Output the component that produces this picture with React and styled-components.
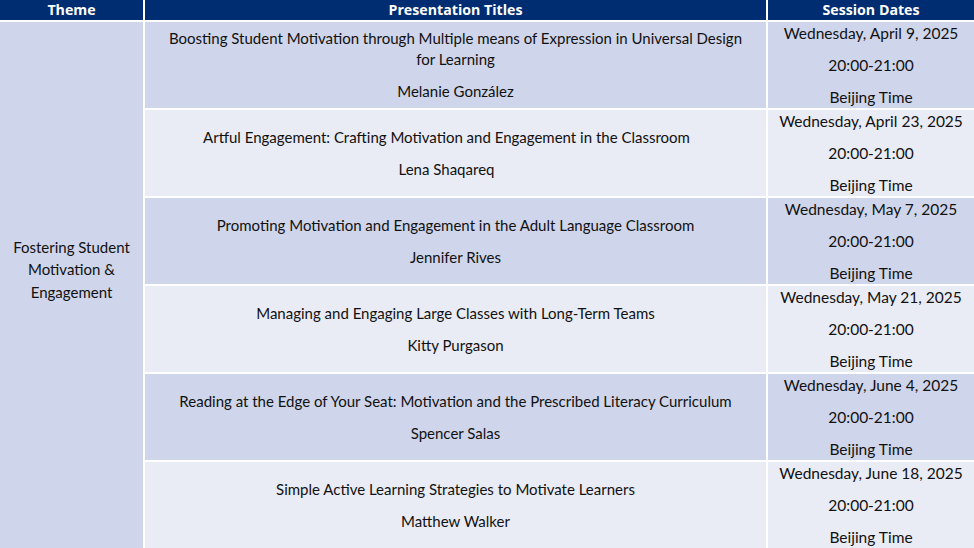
import React from 'react';
import styled, { createGlobalStyle } from 'styled-components';

const Global = createGlobalStyle`
  html, body {
    margin: 0;
    padding: 0;
    background: #ffffff;
    overflow: hidden;
  }
  body {
    font-family: Lato, "Noto Sans", sans-serif;
    color: #111;
  }
`;

const NAVY = '#002d72';
const DARK = '#cfd5ea';
const LIGHT = '#e9ebf5';

const sessions = [
  {
    title: 'Boosting Student Motivation through Multiple means of Expression in Universal Design for Learning',
    speaker: 'Melanie González',
    date: 'Wednesday, April 9, 2025',
  },
  {
    title: 'Artful Engagement: Crafting Motivation and Engagement in the Classroom',
    speaker: 'Lena Shaqareq',
    date: 'Wednesday, April 23, 2025',
    shift: 18,
  },
  {
    title: 'Promoting Motivation and Engagement in the Adult Language Classroom',
    speaker: 'Jennifer Rives',
    date: 'Wednesday, May 7, 2025',
  },
  {
    title: 'Managing and Engaging Large Classes with Long-Term Teams',
    speaker: 'Kitty Purgason',
    date: 'Wednesday, May 21, 2025',
  },
  {
    title: 'Reading at the Edge of Your Seat: Motivation and the Prescribed Literacy Curriculum',
    speaker: 'Spencer Salas',
    date: 'Wednesday, June 4, 2025',
  },
  {
    title: 'Simple Active Learning Strategies to Motivate Learners',
    speaker: 'Matthew Walker',
    date: 'Wednesday, June 18, 2025',
  },
];

const Table = styled.div`
  display: grid;
  grid-template-columns: 143px 621px 206px;
  grid-template-rows: 20px repeat(6, 86px);
  gap: 2px;
  width: 974px;
  height: 548px;
  overflow: hidden;
  background: #ffffff;
`;

const HeadCell = styled.div`
  background: ${NAVY};
  color: #ffffff;
  font-family: "Open Sans", "Noto Sans", sans-serif;
  font-weight: 700;
  font-size: 14.2px;
  display: flex;
  align-items: center;
  justify-content: center;
  line-height: 20px;
`;

const ThemeCell = styled.div`
  grid-row: 2 / span 6;
  background: ${DARK};
  display: flex;
  align-items: center;
  justify-content: center;
  text-align: center;
  font-size: 15px;
  line-height: 22.5px;
  padding: 0 8px 31px;
`;

const Cell = styled.div`
  grid-column: ${p => p.$col};
  background: ${p => (p.$shade ? DARK : LIGHT)};
  display: flex;
  flex-direction: column;
  justify-content: center;
  align-items: center;
  text-align: center;
  padding: 0 ${p => 13 + (p.$shift || 0)}px 0 13px;
  font-size: 15px;
  line-height: 21px;
`;

const DateCell = styled(Cell)`
  padding: 0 4px;
  font-size: 15.5px;
`;

const Para = styled.p`
  margin: 0;
  & + & {
    margin-top: 11px;
  }
`;

export default function App() {
  return (
    <>
      <Global />
      <Table>
        <HeadCell>Theme</HeadCell>
        <HeadCell>Presentation Titles</HeadCell>
        <HeadCell>Session Dates</HeadCell>
        <ThemeCell>
          Fostering Student<br />Motivation &amp;<br />Engagement
        </ThemeCell>
        {sessions.map((s, i) => (
          <React.Fragment key={s.date}>
            <Cell $col={2} $shade={i % 2 === 0} $shift={s.shift}>
              <Para>{s.title}</Para>
              <Para>{s.speaker}</Para>
            </Cell>
            <DateCell $col={3} $shade={i % 2 === 0}>
              <Para>{s.date}</Para>
              <Para>20:00-21:00</Para>
              <Para>Beijing Time</Para>
            </DateCell>
          </React.Fragment>
        ))}
      </Table>
    </>
  );
}
